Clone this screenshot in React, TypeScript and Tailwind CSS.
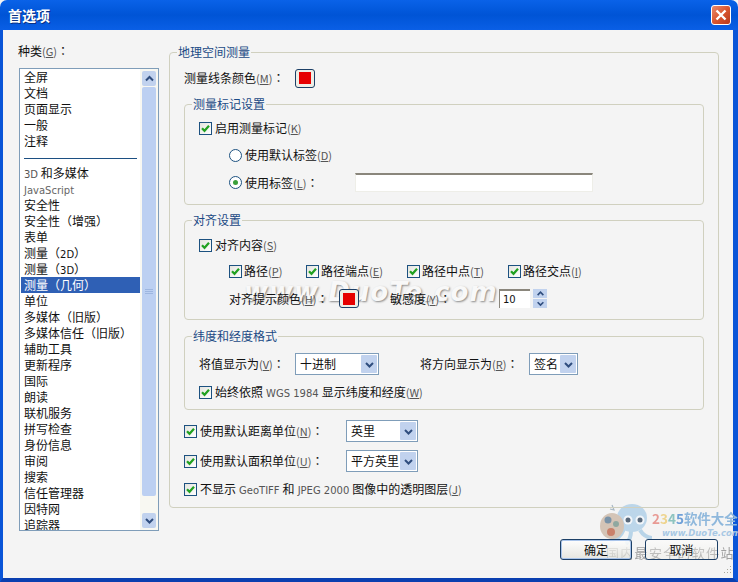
import React from "react";

const Colon = () => <span className="font-['Noto_Sans_CJK_TC','Noto_Sans_CJK_SC',sans-serif]">：</span>;
const Key = ({ k }: { k: string }) => (
  <span className="text-[#555] text-[11px]">(<u>{k}</u>)</span>
);
const Lat = ({ children }: { children: React.ReactNode }) => (
  <span className="text-[#555] text-[10px] mx-[3px] font-['DejaVu_Sans',sans-serif]">{children}</span>
);
const Check = () => (
  <span className="shrink-0 w-[13px] h-[13px] border border-[#1c5180] bg-gradient-to-br from-[#e4e4de] to-white flex items-center justify-center">
    <svg width="11" height="11" viewBox="0 0 11 11">
      <path d="M2 5.2 L4.5 7.8 L9 2.8" fill="none" stroke="#21a121" strokeWidth="2.2" />
    </svg>
  </span>
);
const Radio = ({ on }: { on?: boolean }) => (
  <span className="shrink-0 w-[13px] h-[13px] rounded-full border border-[#1c5180] bg-white flex items-center justify-center">
    {on && <span className="w-[5px] h-[5px] rounded-full bg-[#3aa03a]" />}
  </span>
);
const Swatch = () => (
  <span className="shrink-0 w-[20px] h-[19px] rounded-[3px] border border-[#1c3f66] bg-[#eeeee6] flex items-center justify-center">
    <span className="w-[12px] h-[12px] bg-[#e60000]" />
  </span>
);
const Chevron = ({ up, size = 11 }: { up?: boolean; size?: number }) => (
  <svg width={size} height={size} viewBox="0 0 11 11">
    <path d={up ? "M2 7.5 L5.5 4 L9 7.5" : "M2 4 L5.5 7.5 L9 4"} fill="none" stroke="#2f4d7e" strokeWidth="2" />
  </svg>
);
const Select = ({ w, text }: { w: string; text: string }) => (
  <span className={`shrink-0 h-[22px] border border-[#7f9db9] bg-white flex items-center pl-[4px] pr-[1px] justify-between ${w}`}>
    <span>{text}</span>
    <span className="w-[16px] h-[18px] bg-[#c1d2ee] flex items-center justify-center rounded-[1px]">
      <Chevron />
    </span>
  </span>
);
const Group = ({ title, className, children }: { title: string; className?: string; children: React.ReactNode }) => (
  <fieldset className={`border border-[#d0d0bf] rounded-[4px] m-0 min-w-0 ${className ?? ""}`}>
    <legend className="ml-[-7px] px-[1px] h-[16px] leading-[16px] text-[#1b4a85]">{title}</legend>
    {children}
  </fieldset>
);
const Row = ({ className, children }: { className?: string; children: React.ReactNode }) => (
  <div className={`flex items-center ${className ?? ""}`}>{children}</div>
);

const items: React.ReactNode[] = [
  "全屏", "文档", "页面显示", "一般", "注释", "SEP",
  <><span className="text-[#555] text-[10px] font-['DejaVu_Sans',sans-serif]">3D</span> 和多媒体</>,
  <span className="text-[#666] text-[10px] font-['DejaVu_Sans',sans-serif]">JavaScript</span>,
  "安全性", "安全性（增强）", "表单",
  <>测量（<span className="text-[10px] font-['DejaVu_Sans',sans-serif]">2D</span>）</>,
  <>测量（<span className="text-[10px] font-['DejaVu_Sans',sans-serif]">3D</span>）</>,
  "测量（几何）", "单位", "多媒体（旧版）", "多媒体信任（旧版）", "辅助工具", "更新程序", "国际", "朗读",
  "联机服务", "拼写检查", "身份信息", "审阅", "搜索", "信任管理器", "因特网", "追踪器",
];

export default function App() {
  return (
    <div className="relative w-[738px] h-[582px] overflow-hidden flex flex-col text-[12px] text-[#111] font-['Noto_Sans_CJK_SC','DejaVu_Sans',sans-serif] bg-[#f4f4f4]">
      {/* title bar */}
      <div className="h-[30px] shrink-0 rounded-t-[7px] bg-gradient-to-b from-[#0a62e8] via-[#0054d6] to-[#0a5fe6] flex items-center justify-between pl-[8px] pr-[7px]">
        <span className="text-white font-bold text-[14px] [text-shadow:1px_1px_#0b2f80]">首选项</span>
        <span className="w-[20px] h-[20px] rounded-[3px] border border-white bg-gradient-to-br from-[#e88a6c] via-[#d9562f] to-[#b8391c] flex items-center justify-center">
          <svg width="14" height="14" viewBox="0 0 14 14">
            <path d="M2.5 2.5 L11.5 11.5 M11.5 2.5 L2.5 11.5" stroke="white" strokeWidth="2.4" />
          </svg>
        </span>
      </div>

      {/* body */}
      <div className="flex-1 min-h-0 flex border-l-[3px] border-r-[5px] border-b-[4px] border-l-[#0a55d8] border-r-[#0a55d8] border-b-[#0a3fb0] pl-[15px] pr-[14px] pt-[14px]">
        {/* left column */}
        <div className="relative z-10 w-[141px] shrink-0 mr-[10px]">
          <div className="h-[16px] leading-[16px] mt-[-1px]">种类<Key k="G" /><Colon /></div>
          <div className="mt-[9px] ml-[1px] w-[140px] h-[463px] border border-[#7f9db9] bg-white flex overflow-hidden">
            <div className="flex-1 min-w-0 overflow-hidden pl-[1px]">
              {items.map((it, i) =>
                it === "SEP" ? (
                  <div key={i} className="h-[16px] flex items-center px-[3px] pt-[2px]">
                    <div className="w-full h-[1px] bg-[#1c4f82]" />
                  </div>
                ) : (
                  <div
                    key={i}
                    className={`h-[16px] leading-[16px] pl-[3px] whitespace-nowrap ${it === "测量（几何）" ? "bg-[#2f60b5] text-white" : ""}`}
                  >
                    {it}
                  </div>
                )
              )}
            </div>
            <div className="w-[18px] shrink-0 flex flex-col py-[2px] pl-[2px] pr-[2px] bg-[#f8f8f2]">
              <div className="h-[15px] bg-[#c1d2ee] rounded-[2px] flex items-center justify-center"><Chevron up /></div>
              <div className="mt-[1px] h-[409px] bg-[#bcd0f2] rounded-[2px] flex flex-col items-center justify-center gap-[1px]">
                <div className="w-[8px] h-[1px] bg-[#9db6e0]" />
                <div className="w-[8px] h-[1px] bg-[#9db6e0]" />
                <div className="w-[8px] h-[1px] bg-[#9db6e0]" />
              </div>
              <div className="flex-1" />
              <div className="h-[15px] bg-[#c1d2ee] rounded-[2px] flex items-center justify-center"><Chevron /></div>
            </div>
          </div>
        </div>

        {/* right column */}
        <div className="relative z-10 w-[550px] shrink-0">
          <Group title="地理空间测量" className="px-[14px] pb-[10px]">
            <Row className="mt-[9px] h-[18px]">
              <span className="w-[111px]">测量线条颜色<Key k="M" /><Colon /></span>
              <Swatch />
            </Row>
            <Group title="测量标记设置" className="mt-[9px] pl-[14px] pr-[10px] pb-[12px]">
              <Row className="mt-[8px] h-[16px] gap-[3px]"><Check /><span>启用测量标记<Key k="K" /></span></Row>
              <Row className="mt-[11px] h-[16px] gap-[3px] ml-[30px]"><Radio /><span>使用默认标签<Key k="D" /></span></Row>
              <Row className="mt-[10px] h-[19px] ml-[30px]">
                <Radio on />
                <span className="ml-[3px] w-[110px]">使用标签<Key k="L" /><Colon /></span>
                <span className="w-[238px] h-[19px] border-t-2 border-t-[#8a867c] border-b border-x border-x-[#eeeee8] border-b-[#eeeee8] bg-white" />
              </Row>
            </Group>
            <Group title="对齐设置" className="mt-[7px] pl-[14px] pr-[10px] pb-[11px]">
              <Row className="mt-[9px] h-[16px] gap-[3px]"><Check /><span>对齐内容<Key k="S" /></span></Row>
              <Row className="mt-[10px] h-[16px] ml-[30px]">
                <span className="w-[77px] flex items-center gap-[2px]"><Check /><span>路径<Key k="P" /></span></span>
                <span className="w-[101px] flex items-center gap-[2px]"><Check /><span>路径端点<Key k="E" /></span></span>
                <span className="w-[101px] flex items-center gap-[2px]"><Check /><span>路径中点<Key k="T" /></span></span>
                <span className="flex items-center gap-[2px]"><Check /><span>路径交点<Key k="I" /></span></span>
              </Row>
              <Row className="mt-[10px] h-[19px] ml-[30px]">
                <span className="w-[110px]">对齐提示颜色<Key k="H" /><Colon /></span>
                <Swatch />
                <span className="ml-[31px] w-[109px]">敏感度<Key k="Y" /><Colon /></span>
                <span className="w-[31px] h-[19px] border-t-2 border-l border-t-[#8a867c] border-l-[#8a867c] bg-white pl-[3px] leading-[18px] text-[10px] font-['DejaVu_Sans',sans-serif]">10</span>
                <span className="ml-[3px] w-[14px] h-[19px] flex flex-col gap-[1px]">
                  <span className="flex-1 bg-[#c1d2ee] flex items-center justify-center overflow-hidden"><Chevron up size={9} /></span>
                  <span className="flex-1 bg-[#c1d2ee] flex items-center justify-center overflow-hidden"><Chevron size={9} /></span>
                </span>
              </Row>
            </Group>
            <Group title="纬度和经度格式" className="mt-[8px] pl-[14px] pr-[10px] pb-[9px]">
              <Row className="mt-[9px] h-[22px]">
                <span className="w-[96px]">将值显示为<Key k="V" /><Colon /></span>
                <Select w="w-[84px]" text="十进制" />
                <span className="ml-[41px] w-[109px]">将方向显示为<Key k="R" /><Colon /></span>
                <Select w="w-[49px]" text="签名" />
              </Row>
              <Row className="mt-[9px] h-[16px] gap-[3px]">
                <Check />
                <span>始终依照<Lat>WGS 1984</Lat>显示纬度和经度<Key k="W" /></span>
              </Row>
            </Group>
            <Row className="mt-[10px] h-[22px]">
              <Check />
              <span className="ml-[3px] w-[146px]">使用默认距离单位<Key k="N" /><Colon /></span>
              <Select w="w-[72px]" text="英里" />
            </Row>
            <Row className="mt-[8px] h-[22px]">
              <Check />
              <span className="ml-[3px] w-[146px]">使用默认面积单位<Key k="U" /><Colon /></span>
              <Select w="w-[72px]" text="平方英里" />
            </Row>
            <Row className="mt-[9px] h-[16px] gap-[3px]">
              <Check />
              <span>不显示<Lat>GeoTIFF</Lat>和<Lat>JPEG 2000</Lat>图像中的透明图层<Key k="J" /></span>
            </Row>
          </Group>

          <div className="mt-[31px] flex justify-end gap-[13px] pr-[1px]">
            <span className="w-[72px] h-[21px] rounded-[3px] border border-[#1c3f66] bg-gradient-to-b from-white/90 to-[#dcdcd2]/60 shadow-[inset_0_0_0_1px_#a9c4ea] flex items-center justify-center">确定</span>
            <span className="w-[73px] h-[21px] rounded-[3px] border border-[#1c3f66] bg-gradient-to-b from-white/50 to-[#e6e6dc]/30 flex items-center justify-center">取消</span>
          </div>
        </div>
      </div>

      {/* watermarks */}
      <div className="absolute left-[244px] top-[276px] text-[26px] leading-[32px] font-bold italic text-[#f8f8f8] tracking-[1px] font-['DejaVu_Sans',sans-serif] [text-shadow:1px_1px_2px_#8a8a8a] pointer-events-none whitespace-nowrap">
        www.DuoTe.com
      </div>
      <svg className="absolute left-[598px] top-[503px] pointer-events-none blur-[0.6px]" width="54" height="42" viewBox="0 0 54 42">
        <path d="M14 2 L16 7 L12 6" fill="none" stroke="#a8b8c4" strokeWidth="1.2" />
        <path d="M26 26 Q22 36 12 38 M33 28 Q33 36 28 41 M42 27 Q46 34 54 35" stroke="#b8d4e8" strokeWidth="4" fill="none" />
        <ellipse cx="34" cy="15" rx="15" ry="14" fill="#bcd6ea" />
        <circle cx="30" cy="17" r="4.5" fill="#f2f6fa" />
        <circle cx="42" cy="17" r="4.5" fill="#f2f6fa" />
        <circle cx="30" cy="17" r="2.5" fill="#58687a" />
        <circle cx="42" cy="17" r="2.5" fill="#58687a" />
        <ellipse cx="14" cy="23" rx="12" ry="13" fill="#d4c4b6" />
        <circle cx="10" cy="17" r="3.5" fill="#7a93a8" />
        <circle cx="18" cy="21" r="3" fill="#8fa8a0" />
        <circle cx="13" cy="29" r="4" fill="#c9806a" />
      </svg>
      <div className="absolute left-[652px] top-[510px] text-[13.5px] leading-[16px] font-bold text-[#8fb8dc] whitespace-nowrap pointer-events-none blur-[0.4px]">
        <span className="text-[#e89a94]">2</span><span className="text-[#eed48e]">3</span><span className="text-[#8ec4c0]">4</span><span className="text-[#6fa0d8]">5</span>软件大全
      </div>
      <div className="absolute left-[662px] top-[527px] text-[8.5px] leading-[12px] font-bold italic text-[#a8c8e4] font-['DejaVu_Sans',sans-serif] whitespace-nowrap pointer-events-none">
        www.DuoTe.com
      </div>
      <div className="absolute left-[606px] top-[545px] text-[13px] leading-[16px] text-[#a0a0a0] tracking-[1.3px] whitespace-nowrap pointer-events-none blur-[0.4px]">
        国内最安全的软件站
      </div>
      <svg className="absolute left-[722px] top-[565px] pointer-events-none" width="10" height="10" viewBox="0 0 10 10">
        <path d="M8 1h1v1H8zM5 4h1v1H5zM8 4h1v1H8zM2 7h1v1H2zM5 7h1v1H5zM8 7h1v1H8z" fill="#a8a89c" />
      </svg>
    </div>
  );
}
